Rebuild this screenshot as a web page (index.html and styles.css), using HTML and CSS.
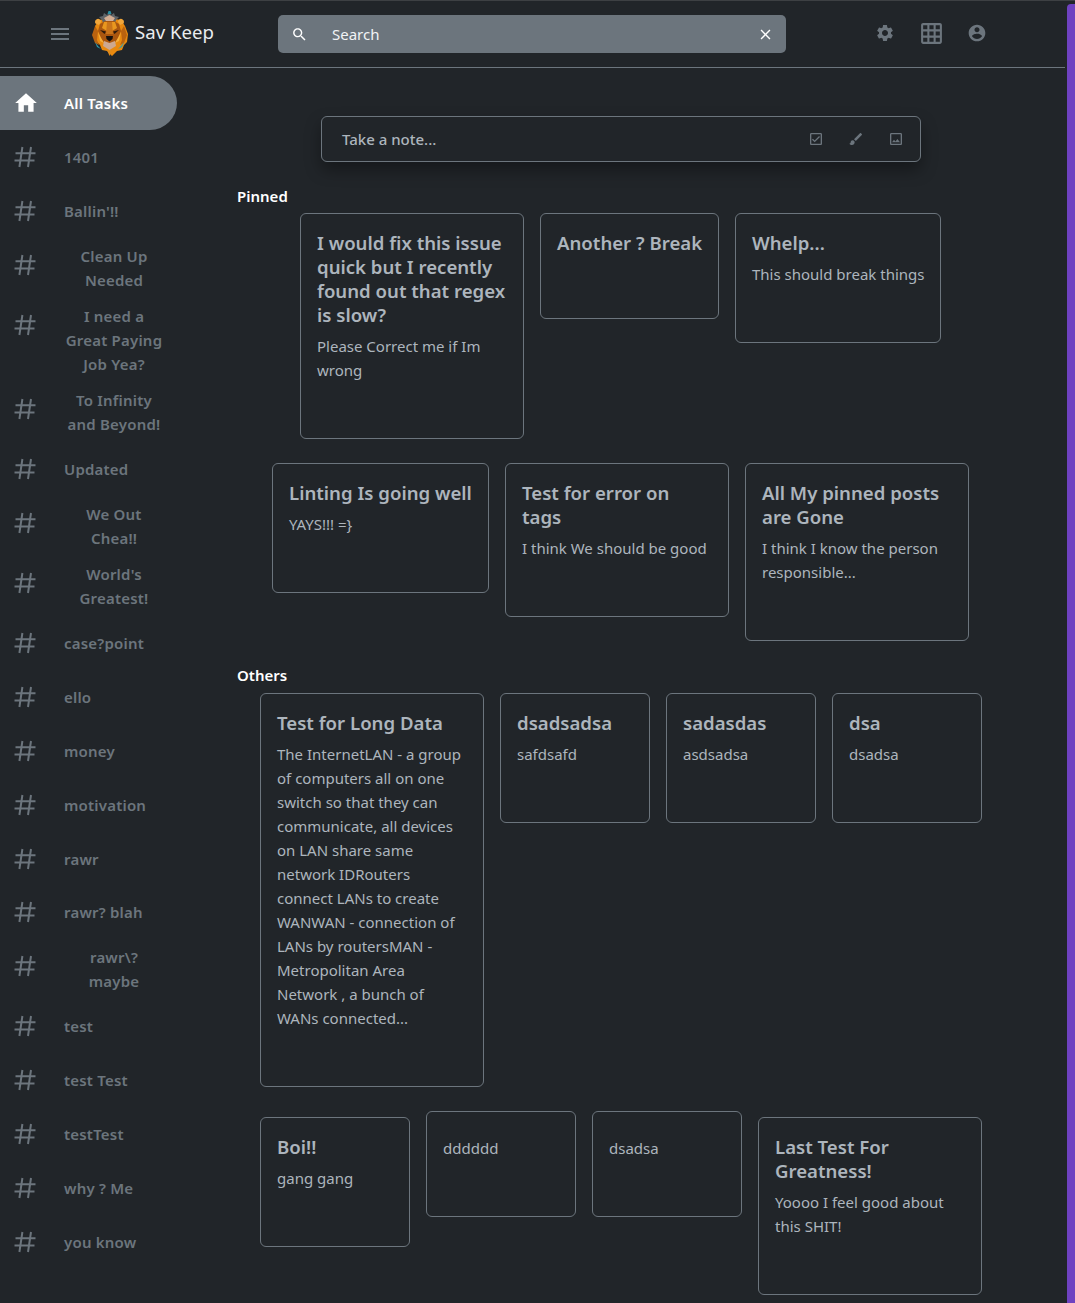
FILE: index.html
```html
<!DOCTYPE html>
<html lang="en">
<head>
<meta charset="utf-8">
<title>Sav Keep</title>
<link rel="stylesheet" href="styles.css">
</head>
<body>
<svg class="defs" width="0" height="0" aria-hidden="true">
  <defs>
    <symbol id="hash" viewBox="0 0 22 22"><path d="M8.4 1 5.4 21M17 1l-3 20M1.500 7.200h20M.5 14.600h20" fill="none" stroke="currentColor" stroke-width="2"/></symbol>
  </defs>
</svg>
<div class="shell">
  <div class="app">
    <header class="topbar">
      <button class="menu-btn" aria-label="Menu"><span></span><span></span><span></span></button>
      <svg class="logo" viewBox="0 0 37 46" aria-hidden="true">
        <path d="M4 16l4-6 6-1 5 2 5-2 6 1 4 6 3 8-1 8-3 3-2 5-5 1-5 5-5-5-5-1-2-5-3-3-1-8z" fill="#e8890f"/>
        <path d="M1 25l3-9 3 5-1 9 2 5-4-2zM36 25l-3-9-3 5 1 9-2 5 4-2z" fill="#b9620f"/>
        <path d="M18.500 2l1.500 3 3-2 1 3 4 1-3 3-1 3H12l-1-3-3-3 4-1 1-3 3 2z" fill="#5f6468"/>
        <path d="M13 8l5.500-3 5.500 3-2 3h-7z" fill="#d3ad93"/>
        <path d="M17.500 1h2l1 3h-4z" fill="#2b8fa3"/>
        <path d="M10 12a3 3 0 1 0-5.500 1.500L8 15zM27 12a3 3 0 1 1 5.500 1.500L29 15z" fill="#f0a63a"/>
        <path d="M9 14l5-3h9l5 3 2 7-3 7-4 6h-9l-4-6-3-7z" fill="#a9560f"/>
        <path d="M13 12h11l2 6-5 3h-5l-5-3z" fill="#e9971f"/>
        <path d="M16 12h5l1 12h-7z" fill="#c9741a"/>
        <path d="M9 20l6 1.500-1.500 2.500zM28 20l-6 1.500 1.500 2.500z" fill="#2a190c"/>
        <path d="M7 22l3 6 3 5-4-2zM30 22l-3 6-3 5 4-2z" fill="#f4ae3c"/>
        <path d="M15 26h7l-.5 3-3 2.500-3-2.500z" fill="#17110d"/>
        <path d="M13 31l5.500 2 5.500-2 1 5-6.500 4-6.500-4z" fill="#cda890"/>
        <path d="M4 32l3 4 3 3-4-2zM33 32l-3 4-3 3 4-2z" fill="#2b9fb3"/>
        <path d="M16 40h5l-2.500 6z" fill="#e08a1a"/>
      </svg>
      <span class="brand">Sav Keep</span>
      <div class="search">
        <span class="search-addon">
          <svg class="icon-17" viewBox="0 0 24 24" aria-hidden="true"><path d="M15.500 14h-.79l-.28-.27C15.410 12.590 16 11.110 16 9.500 16 5.910 13.090 3 9.500 3S3 5.910 3 9.500 5.910 16 9.500 16c1.610 0 3.090-.59 4.230-1.570l.27.28v.79l5 4.990L20.490 19l-4.990-5zm-6 0C7.010 14 5 11.990 5 9.500S7.010 5 9.500 5 14 7.010 14 9.500 11.990 14 9.500 14z"/></svg>
        </span>
        <span class="search-input">Search</span>
        <span class="search-addon">
          <svg class="icon-17" viewBox="0 0 24 24" aria-hidden="true"><path d="M19 6.410L17.590 5 12 10.590 6.410 5 5 6.410 10.590 12 5 17.590 6.410 19 12 13.410 17.590 19 19 17.590 13.410 12z"/></svg>
        </span>
      </div>
      <div class="top-actions">
        <svg class="icon-20" viewBox="0 0 24 24" aria-hidden="true"><path d="M19.140 12.940c.04-.3.06-.61.06-.94 0-.32-.02-.64-.07-.94l2.030-1.580c.18-.14.23-.41.12-.61l-1.920-3.320c-.12-.22-.37-.29-.59-.22l-2.390.96c-.5-.38-1.030-.7-1.620-.94l-.36-2.540c-.04-.24-.24-.41-.48-.41h-3.840c-.24 0-.43.17-.47.41l-.36 2.540c-.59.24-1.130.57-1.620.94l-2.390-.96c-.22-.08-.47 0-.59.22L2.740 8.870c-.12.21-.08.47.12.61l2.030 1.580c-.05.3-.09.63-.09.94s.02.64.07.94l-2.030 1.580c-.18.14-.23.41-.12.61l1.920 3.320c.12.22.37.29.59.22l2.390-.96c.5.38 1.030.7 1.620.94l.36 2.540c.05.24.24.41.48.41h3.840c.24 0 .44-.17.47-.41l.36-2.540c.59-.24 1.130-.56 1.620-.94l2.390.96c.22.08.47 0 .59-.22l1.920-3.320c.12-.22.07-.47-.12-.61l-2.010-1.580zM12 15.600c-1.980 0-3.600-1.620-3.600-3.600s1.620-3.600 3.600-3.600 3.600 1.620 3.600 3.600-1.620 3.600-3.600 3.600z"/></svg>
        <svg class="icon-25" viewBox="0 0 24 24" aria-hidden="true"><path d="M20 2H4c-1.100 0-2 .9-2 2v16c0 1.100.9 2 2 2h16c1.100 0 2-.9 2-2V4c0-1.100-.9-2-2-2zM8 20H4v-4h4v4zm0-6H4v-4h4v4zm0-6H4V4h4v4zm6 12h-4v-4h4v4zm0-6h-4v-4h4v4zm0-6h-4V4h4v4zm6 12h-4v-4h4v4zm0-6h-4v-4h4v4zm0-6h-4V4h4v4z"/></svg>
        <svg class="icon-20" viewBox="0 0 24 24" aria-hidden="true"><path d="M12 2C6.480 2 2 6.480 2 12s4.480 10 10 10 10-4.480 10-10S17.520 2 12 2zm0 3c1.660 0 3 1.340 3 3s-1.340 3-3 3-3-1.340-3-3 1.340-3 3-3zm0 14.200c-2.500 0-4.710-1.280-6-3.220.03-1.990 4-3.080 6-3.080 1.990 0 5.970 1.090 6 3.080-1.290 1.940-3.500 3.220-6 3.220z"/></svg>
      </div>
    </header>
    <div class="body-row">
      <nav class="sidebar">
        <a class="nav-item active"><span class="nav-icon"><svg class="icon-26" viewBox="0 0 24 24" aria-hidden="true"><path d="M10 20v-6h4v6h5v-8h3L12 3 2 12h3v8z"/></svg></span><span class="nav-label">All Tasks</span></a>
        <a class="nav-item"><span class="nav-icon"><svg class="hash"><use href="#hash"/></svg></span><span class="nav-label">1401</span></a>
        <a class="nav-item"><span class="nav-icon"><svg class="hash"><use href="#hash"/></svg></span><span class="nav-label">Ballin'!!</span></a>
        <a class="nav-item"><span class="nav-icon"><svg class="hash"><use href="#hash"/></svg></span><span class="nav-label">Clean Up Needed</span></a>
        <a class="nav-item"><span class="nav-icon"><svg class="hash"><use href="#hash"/></svg></span><span class="nav-label">I need a Great Paying Job Yea?</span></a>
        <a class="nav-item"><span class="nav-icon"><svg class="hash"><use href="#hash"/></svg></span><span class="nav-label">To Infinity and Beyond!</span></a>
        <a class="nav-item"><span class="nav-icon"><svg class="hash"><use href="#hash"/></svg></span><span class="nav-label">Updated</span></a>
        <a class="nav-item"><span class="nav-icon"><svg class="hash"><use href="#hash"/></svg></span><span class="nav-label full">We Out Chea!!</span></a>
        <a class="nav-item"><span class="nav-icon"><svg class="hash"><use href="#hash"/></svg></span><span class="nav-label full">World's Greatest!</span></a>
        <a class="nav-item"><span class="nav-icon"><svg class="hash"><use href="#hash"/></svg></span><span class="nav-label">case?point</span></a>
        <a class="nav-item"><span class="nav-icon"><svg class="hash"><use href="#hash"/></svg></span><span class="nav-label">ello</span></a>
        <a class="nav-item"><span class="nav-icon"><svg class="hash"><use href="#hash"/></svg></span><span class="nav-label">money</span></a>
        <a class="nav-item"><span class="nav-icon"><svg class="hash"><use href="#hash"/></svg></span><span class="nav-label">motivation</span></a>
        <a class="nav-item"><span class="nav-icon"><svg class="hash"><use href="#hash"/></svg></span><span class="nav-label">rawr</span></a>
        <a class="nav-item nav-tight"><span class="nav-icon"><svg class="hash"><use href="#hash"/></svg></span><span class="nav-label">rawr? blah</span></a>
        <a class="nav-item"><span class="nav-icon"><svg class="hash"><use href="#hash"/></svg></span><span class="nav-label full">rawr\?<br>maybe</span></a>
        <a class="nav-item"><span class="nav-icon"><svg class="hash"><use href="#hash"/></svg></span><span class="nav-label">test</span></a>
        <a class="nav-item"><span class="nav-icon"><svg class="hash"><use href="#hash"/></svg></span><span class="nav-label">test Test</span></a>
        <a class="nav-item"><span class="nav-icon"><svg class="hash"><use href="#hash"/></svg></span><span class="nav-label">testTest</span></a>
        <a class="nav-item"><span class="nav-icon"><svg class="hash"><use href="#hash"/></svg></span><span class="nav-label">why ? Me</span></a>
        <a class="nav-item"><span class="nav-icon"><svg class="hash"><use href="#hash"/></svg></span><span class="nav-label">you know</span></a>
      </nav>
      <main class="content">
        <div class="composer">
          <span class="composer-text">Take a note...</span>
          <div class="composer-actions">
            <svg class="icon-16" viewBox="0 0 24 24" aria-hidden="true"><path d="M19 3H5c-1.110 0-2 .9-2 2v14c0 1.100.89 2 2 2h14c1.110 0 2-.9 2-2V5c0-1.100-.89-2-2-2zm0 16H5V5h14v14zM17.990 9l-1.410-1.420-6.590 6.590-2.580-2.570-1.420 1.410 4 3.990z"/></svg>
            <svg class="icon-16" viewBox="0 0 24 24" aria-hidden="true"><path d="M7 14c-1.660 0-3 1.340-3 3 0 1.310-1.160 2-2 2 .92 1.220 2.490 2 4 2 2.210 0 4-1.790 4-4 0-1.660-1.340-3-3-3zm13.710-9.370l-1.340-1.340c-.39-.39-1.020-.39-1.410 0L9 12.250 11.750 15l8.960-8.960c.39-.39.39-1.020 0-1.410z"/></svg>
            <svg class="icon-16" viewBox="0 0 24 24" aria-hidden="true"><path d="M19 5v14H5V5h14m0-2H5c-1.100 0-2 .9-2 2v14c0 1.100.9 2 2 2h14c1.100 0 2-.9 2-2V5c0-1.100-.9-2-2-2zm-4.860 8.860l-3 3.870L9 13.140 6 17h12l-3.860-5.140z"/></svg>
          </div>
        </div>
        <section class="group">
          <h2 class="group-label">Pinned</h2>
          <div class="notes notes-pinned">
            <article class="note w-224"><h3 class="note-title">I would fix this issue quick but I recently found out that regex is slow?</h3><p class="note-text">Please Correct me if Im wrong</p></article>
            <article class="note w-179"><h3 class="note-title">Another ? Break</h3></article>
            <article class="note w-206"><h3 class="note-title">Whelp...</h3><p class="note-text">This should break things</p></article>
            <article class="note w-217"><h3 class="note-title">Linting Is going well</h3><p class="note-text">YAYS!!! =}</p></article>
            <article class="note w-224"><h3 class="note-title">Test for error on tags</h3><p class="note-text">I think We should be good</p></article>
            <article class="note w-224"><h3 class="note-title">All My pinned posts are Gone</h3><p class="note-text">I think I know the person responsible...</p></article>
          </div>
        </section>
        <section class="group">
          <h2 class="group-label">Others</h2>
          <div class="notes">
            <article class="note w-224"><h3 class="note-title">Test for Long Data</h3><p class="note-text">The InternetLAN - a group of computers all on one switch so that they can communicate, all devices on LAN share same network IDRouters connect LANs to create WANWAN - connection of LANs by routersMAN - Metropolitan Area Network , a bunch of WANs connected...</p></article>
            <article class="note w-150"><h3 class="note-title">dsadsadsa</h3><p class="note-text">safdsafd</p></article>
            <article class="note w-150"><h3 class="note-title">sadasdas</h3><p class="note-text">asdsadsa</p></article>
            <article class="note w-150"><h3 class="note-title">dsa</h3><p class="note-text">dsadsa</p></article>
            <article class="note w-150"><h3 class="note-title">Boi!!</h3><p class="note-text">gang gang</p></article>
            <article class="note w-150"><p class="note-text no-title">dddddd</p></article>
            <article class="note w-150"><p class="note-text no-title">dsadsa</p></article>
            <article class="note w-224"><h3 class="note-title">Last Test For Greatness!</h3><p class="note-text">Yoooo I feel good about this SHIT!</p></article>
          </div>
        </section>
      </main>
    </div>
  </div>
  <div class="scrollbar"></div>
</div>
</body>
</html>
```

FILE: styles.css
```css
* { box-sizing: border-box; }
html, body { margin: 0; height: 1303px; overflow: hidden; }
body {
  background: #212529;
  color: #adb5bd;
  font-family: "Noto Sans", "Open Sans", sans-serif;
  font-size: 15px;
  line-height: 24px;
  border-top: 1px solid #3d4043;
}
.defs { position: absolute; }
svg { fill: currentColor; display: block; flex: none; }
.shell { display: flex; height: 100%; }
.app { width: 1065px; flex: none; }
.scrollbar { width: 8px; margin: 3px 0 0 2px; background: #6f42c1; border-radius: 4px 0 0 0; }

.topbar {
  display: flex;
  align-items: center;
  height: 67px;
  padding-left: 51px;
  border-bottom: 1px solid #6c757d;
  color: #6c757d;
}
.menu-btn { display: flex; flex-direction: column; justify-content: space-between; width: 18px; height: 12px; padding: 0; border: 0; background: none; }
.menu-btn span { height: 2px; background: #6c757d; }
.logo { width: 37px; height: 46px; margin-left: 22px; margin-bottom: 3px; }
.brand { margin: -4px 0 0 7px; width: 143px; color: #e9ecef; font-size: 18.600px; line-height: 24px; }
.search { display: flex; align-items: center; width: 508px; height: 38px; background: #6c757d; border-radius: 5px; color: #fff; }
.search-addon { display: flex; justify-content: center; align-items: center; width: 42px; height: 100%; }
.search-input { flex: 1; padding-left: 12px; font-size: 15px; color: #f1f3f5; }
.top-actions { display: flex; align-items: center; margin-left: 89px; gap: 23.500px; margin-top: -2px; }

.icon-16 { width: 16px; height: 16px; }
.icon-17 { width: 17px; height: 17px; }
.icon-20 { width: 20px; height: 20px; }
.icon-25 { width: 25px; height: 25px; }
.icon-26 { width: 26px; height: 26px; }
.hash { width: 22px; height: 22px; margin-left: 1px; }

.body-row { display: flex; }
.sidebar { width: 177px; flex: none; padding-top: 8px; color: #6c757d; font-weight: 600; font-size: 15px; letter-spacing: .2px; }
.nav-item { display: flex; align-items: flex-start; gap: 25px; padding: 6px 0 6px 13px; }
.nav-item.active { color: #fff; background: #6c757d; border-radius: 0 27px 27px 0; }
.nav-tight { margin-top: -1px; }
.nav-icon { display: flex; align-items: center; width: 26px; height: 42px; flex: none; }
.nav-label { align-self: center; max-width: 100px; text-align: center; }
.nav-label.full { width: 100px; }

.content { flex: 1; min-width: 0; padding: 48px 60px 0; }
.composer {
  display: flex;
  justify-content: space-between;
  align-items: center;
  width: 600px;
  height: 46px;
  margin: 0 auto;
  padding: 0 16px 0 20px;
  border: 1px solid #6c757d;
  border-radius: 6px;
  box-shadow: 0 8px 16px rgba(0, 0, 0, .35);
}
.composer-text { font-weight: 500; font-size: 15px; }
.composer-actions { display: flex; gap: 24px; color: #6c757d; }
.group-label { margin: 22px 0 5px; color: #fff; font-size: 15px; line-height: 24px; font-weight: 600; }
.group + .group .group-label { margin-bottom: 6px; }
.notes { display: flex; flex-wrap: wrap; justify-content: center; align-items: baseline; gap: 24px 16px; }
.notes-pinned { padding-right: 1px; }
.note { padding: 17px 16px 56px; border: 1px solid #6c757d; border-radius: 6px; }
.note-title { margin: 0 0 7px; font-size: 18.600px; line-height: 24px; font-weight: 600; color: #adb5bd; }
.note-text { margin: 0; font-size: 15px; line-height: 24px; }
.no-title { margin-top: 7px; }
.w-150 { width: 150px; }
.w-179 { width: 179px; padding-right: 8px; }
.w-206 { width: 206px; padding-right: 8px; }
.w-217 { width: 217px; }
.w-224 { width: 224px; }
```
